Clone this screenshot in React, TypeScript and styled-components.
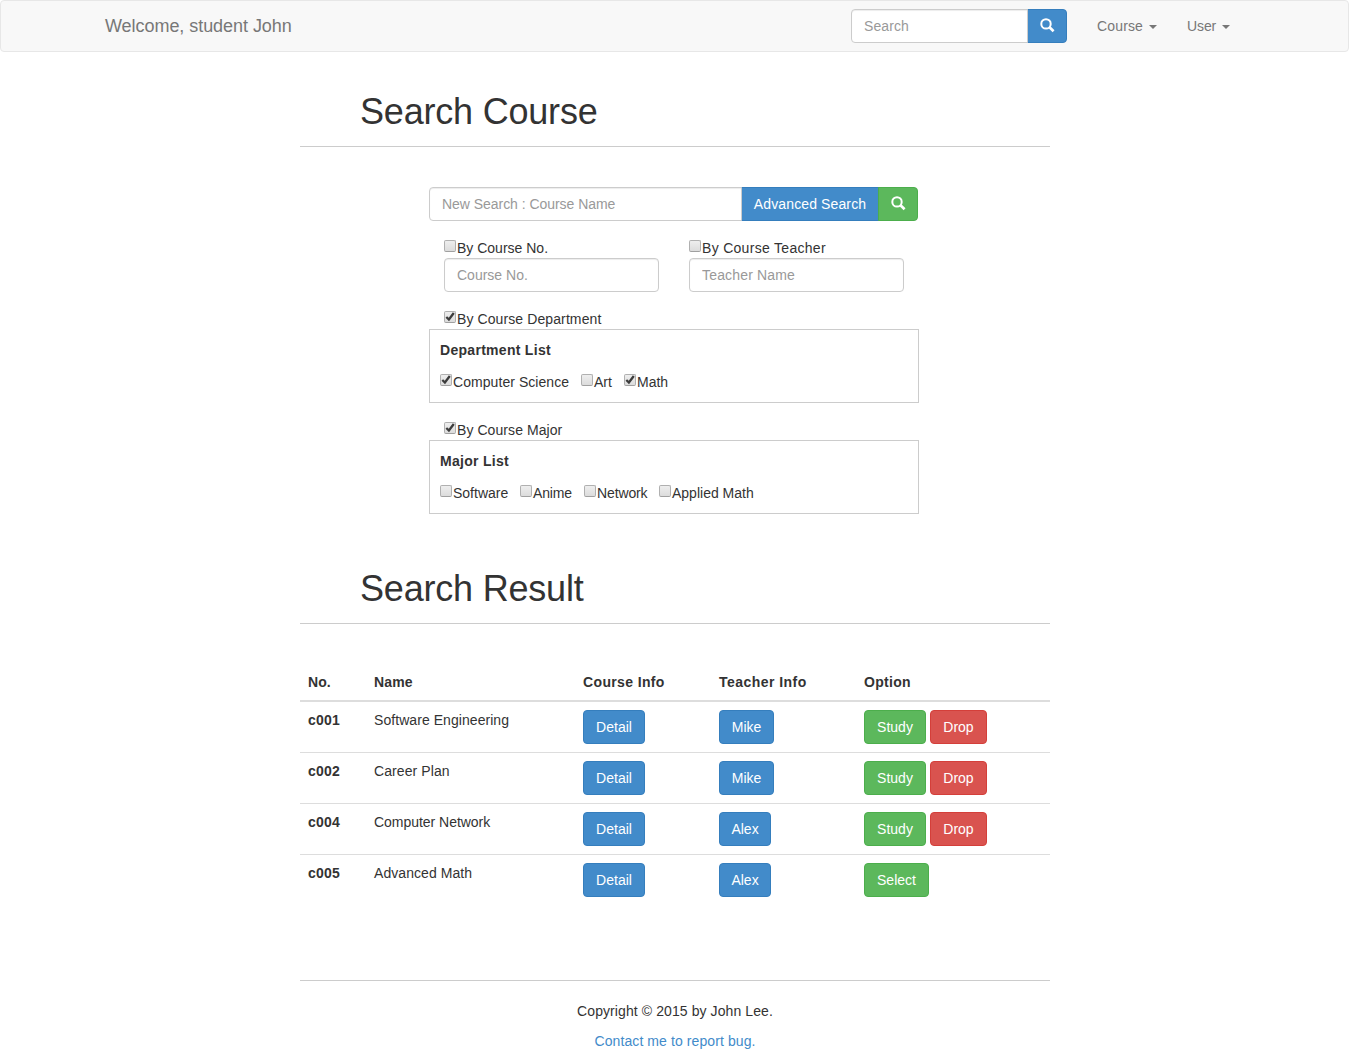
import React from 'react';
import styled, { createGlobalStyle } from 'styled-components';

const GlobalStyle = createGlobalStyle`
  * { box-sizing: border-box; }
  html, body { margin: 0; background: #fff; }
  body {
    font-family: "Liberation Sans", Arial, Helvetica, sans-serif;
    font-size: 14px;
    line-height: 20px;
    color: #333;
    overflow: hidden;
  }
`;

type Tone = 'primary' | 'success' | 'danger';
const tones: Record<Tone, { bg: string; border: string }> = {
  primary: { bg: '#428bca', border: '#357ebd' },
  success: { bg: '#5cb85c', border: '#4cae4c' },
  danger: { bg: '#d9534f', border: '#d43f3a' },
};

const Tracked = styled.span<{ $track?: number }>`
  letter-spacing: ${(p) => p.$track ?? 0}px;
`;

const Navbar = styled.nav`
  height: 52px;
  padding: 0 104px;
  display: flex;
  align-items: center;
  background: #f8f8f8;
  border: 1px solid #e7e7e7;
  border-radius: 4px;
  color: #777;
`;

const Brand = styled.span`
  flex: 1;
  font-size: 18px;
  letter-spacing: -0.05px;
`;

const NavItem = styled.a<{ $width: number }>`
  display: flex;
  align-items: center;
  justify-content: space-between;
  width: ${(p) => p.$width}px;
  margin-left: 30px;
`;

const NavEnd = styled.div`
  display: flex;
  align-items: center;
  padding-right: 14px;
`;

const Caret = styled.span`
  border: 4px solid transparent;
  border-top-color: currentColor;
  border-bottom: 0;
  margin-top: 1px;
`;

const InputGroup = styled.div`
  display: flex;
`;

const Input = styled.input<{ $width: number; $joined?: boolean; $track?: number }>`
  position: relative;
  z-index: ${(p) => (p.$joined ? 1 : 'auto')};
  width: ${(p) => p.$width}px;
  height: 34px;
  margin: 0;
  padding: 6px 12px;
  font: inherit;
  letter-spacing: ${(p) => p.$track ?? 0}px;
  color: #555;
  background: #fff;
  border: 1px solid #ccc;
  border-radius: ${(p) => (p.$joined ? '4px 0 0 4px' : '4px')};
  box-shadow: inset 0 1px 1px rgba(0, 0, 0, 0.075);
  outline: none;
  &::placeholder { color: #999; opacity: 1; }
`;

const Button = styled.button<{ $tone: Tone; $width?: number; $joined?: 'middle' | 'end' }>`
  display: inline-flex;
  align-items: center;
  justify-content: center;
  width: ${(p) => (p.$width ? `${p.$width}px` : 'auto')};
  height: 34px;
  margin: 0 0 0 ${(p) => (p.$joined ? '-1px' : '0')};
  padding: 0 12px;
  font: inherit;
  color: #fff;
  white-space: nowrap;
  background: ${(p) => tones[p.$tone].bg};
  border: 1px solid ${(p) => tones[p.$tone].border};
  border-radius: ${(p) => (p.$joined === 'middle' ? '0' : p.$joined === 'end' ? '0 4px 4px 0' : '4px')};
`;

const Glyph = styled.svg`
  flex: none;
  margin-bottom: 2px;
  overflow: visible;
`;

const Page = styled.main`
  width: 750px;
  margin: 0 0 0 300px;
`;

const Title = styled.h1<{ $top: number }>`
  margin: ${(p) => p.$top}px 0 40px;
  padding: 0 0 14px 60px;
  height: 55px;
  font-size: 36px;
  font-weight: 400;
  line-height: 40px;
  letter-spacing: -0.2px;
  border-bottom: 1px solid #ccc;
`;

const Form = styled.form`
  width: 490px;
  margin-left: 129px;
`;

const FieldRow = styled.div`
  display: flex;
  gap: 30px;
  margin-top: 17px;
  padding-left: 15px;
`;

const Group = styled.section`
  margin-top: 17px;
`;

const GroupHead = styled.div`
  height: 20px;
  padding-left: 15px;
`;

const Panel = styled.div`
  height: 74px;
  padding: 10px;
  border: 1px solid #ccc;
`;

const PanelTitle = styled.div`
  margin-bottom: 12px;
  font-weight: 700;
  letter-spacing: 0.29px;
`;

const Options = styled.div`
  display: flex;
`;

const CheckLabel = styled.label<{ $width?: number }>`
  display: flex;
  flex: none;
  height: 20px;
  width: ${(p) => (p.$width ? `${p.$width}px` : 'auto')};
  white-space: nowrap;
`;

const Box = styled.span`
  flex: none;
  width: 12px;
  height: 12px;
  margin: 2px 1px 0 0;
  border: 1px solid #b0b0b0;
  border-bottom-color: #a0a0a0;
  border-radius: 2px;
  background: linear-gradient(#eee, #dcdcdc);
  svg { display: block; overflow: visible; }
`;

const Table = styled.table`
  width: 750px;
  table-layout: fixed;
  border-spacing: 0;
  text-align: left;
  th, td { padding: 8px; vertical-align: top; }
  thead th { height: 38px; border-bottom: 2px solid #ddd; }
  tbody th { letter-spacing: 0.25px; }
  tbody tr + tr > * { border-top: 1px solid #ddd; }
`;

const Actions = styled.div`
  display: flex;
  gap: 4px;
`;

const Footer = styled.footer`
  margin-top: 75px;
  padding-top: 20px;
  border-top: 1px solid #ccc;
  text-align: center;
  letter-spacing: 0.09px;
  p { margin: 0 0 10px; }
  a { color: #428bca; text-decoration: none; }
`;

const SearchIcon = () => (
  <Glyph width="14" height="14" viewBox="0 0 14 14" fill="none" stroke="#fff">
    <circle cx="6" cy="5.9" r="4.7" strokeWidth="2" />
    <path d="M9.5 9.3L13.6 13.2" strokeWidth="2.7" />
  </Glyph>
);

type CheckProps = { label: string; checked?: boolean; width?: number; track?: number };

const Check = ({ label, checked, width, track }: CheckProps) => (
  <CheckLabel $width={width}>
    <Box>
      {checked && (
        <svg width="10" height="10" viewBox="0 0 10 10" fill="none" stroke="#3c3c3c" strokeWidth="2.3">
          <path d="M1.3 5L3.9 7.5L8.8 1" />
        </svg>
      )}
    </Box>
    <Tracked $track={track}>{label}</Tracked>
  </CheckLabel>
);

const columns = [
  { title: 'No.', width: 66, track: 0.1 },
  { title: 'Name', width: 209, track: 0.15 },
  { title: 'Course Info', width: 136, track: 0.36 },
  { title: 'Teacher Info', width: 145, track: 0.46 },
  { title: 'Option', width: 194, track: 0.3 },
];

const courses = [
  { no: 'c001', name: 'Software Engineering', track: 0.06, teacher: 'Mike', enrolled: true },
  { no: 'c002', name: 'Career Plan', track: 0.09, teacher: 'Mike', enrolled: true },
  { no: 'c004', name: 'Computer Network', track: -0.03, teacher: 'Alex', enrolled: true },
  { no: 'c005', name: 'Advanced Math', track: 0.06, teacher: 'Alex', enrolled: false },
];

export default function App() {
  return (
    <>
      <GlobalStyle />
      <Navbar>
        <Brand>Welcome, student John</Brand>
        <NavEnd>
          <InputGroup>
            <Input $width={177} $joined $track={0.08} placeholder="Search" />
            <Button $tone="primary" $width={40} $joined="end" type="button"><SearchIcon /></Button>
          </InputGroup>
          <NavItem $width={60}><Tracked $track={0.15}>Course</Tracked><Caret /></NavItem>
          <NavItem $width={43}><Tracked $track={-0.1}>User</Tracked><Caret /></NavItem>
        </NavEnd>
      </Navbar>
      <Page>
        <Title $top={40}>Search Course</Title>
        <Form>
          <InputGroup>
            <Input $width={313} $joined $track={-0.04} placeholder="New Search : Course Name" />
            <Button $tone="primary" $width={138} $joined="middle" type="button">
              <Tracked $track={0.12}>Advanced Search</Tracked>
            </Button>
            <Button $tone="success" $width={40} $joined="end" type="button"><SearchIcon /></Button>
          </InputGroup>
          <FieldRow>
            <div>
              <Check label="By Course No." />
              <Input $width={215} placeholder="Course No." />
            </div>
            <div>
              <Check label="By Course Teacher" track={0.3} />
              <Input $width={215} $track={0.17} placeholder="Teacher Name" />
            </div>
          </FieldRow>
          <Group>
            <GroupHead><Check label="By Course Department" checked track={0.1} /></GroupHead>
            <Panel>
              <PanelTitle>Department List</PanelTitle>
              <Options>
                <Check label="Computer Science" checked width={141} track={0.06} />
                <Check label="Art" width={43} />
                <Check label="Math" checked />
              </Options>
            </Panel>
          </Group>
          <Group>
            <GroupHead><Check label="By Course Major" checked track={0.07} /></GroupHead>
            <Panel>
              <PanelTitle>Major List</PanelTitle>
              <Options>
                <Check label="Software" width={80} />
                <Check label="Anime" width={64} track={-0.15} />
                <Check label="Network" width={75} track={-0.12} />
                <Check label="Applied Math" />
              </Options>
            </Panel>
          </Group>
        </Form>
        <Title $top={55}>Search Result</Title>
        <Table>
          <colgroup>
            {columns.map((c) => <col key={c.title} width={c.width} />)}
          </colgroup>
          <thead>
            <tr>
              {columns.map((c) => (
                <th key={c.title}><Tracked $track={c.track}>{c.title}</Tracked></th>
              ))}
            </tr>
          </thead>
          <tbody>
            {courses.map((c) => (
              <tr key={c.no}>
                <th>{c.no}</th>
                <td><Tracked $track={c.track}>{c.name}</Tracked></td>
                <td><Actions><Button $tone="primary" $width={62}>Detail</Button></Actions></td>
                <td><Actions><Button $tone="primary" $width={c.teacher === 'Mike' ? 55 : 52}>{c.teacher}</Button></Actions></td>
                <td>
                  {c.enrolled ? (
                    <Actions>
                      <Button $tone="success" $width={62}>Study</Button>
                      <Button $tone="danger" $width={57}>Drop</Button>
                    </Actions>
                  ) : (
                    <Actions><Button $tone="success" $width={65}>Select</Button></Actions>
                  )}
                </td>
              </tr>
            ))}
          </tbody>
        </Table>
        <Footer>
          <p>Copyright © 2015 by John Lee.</p>
          <p><a>Contact me to report bug.</a></p>
        </Footer>
      </Page>
    </>
  );
}
